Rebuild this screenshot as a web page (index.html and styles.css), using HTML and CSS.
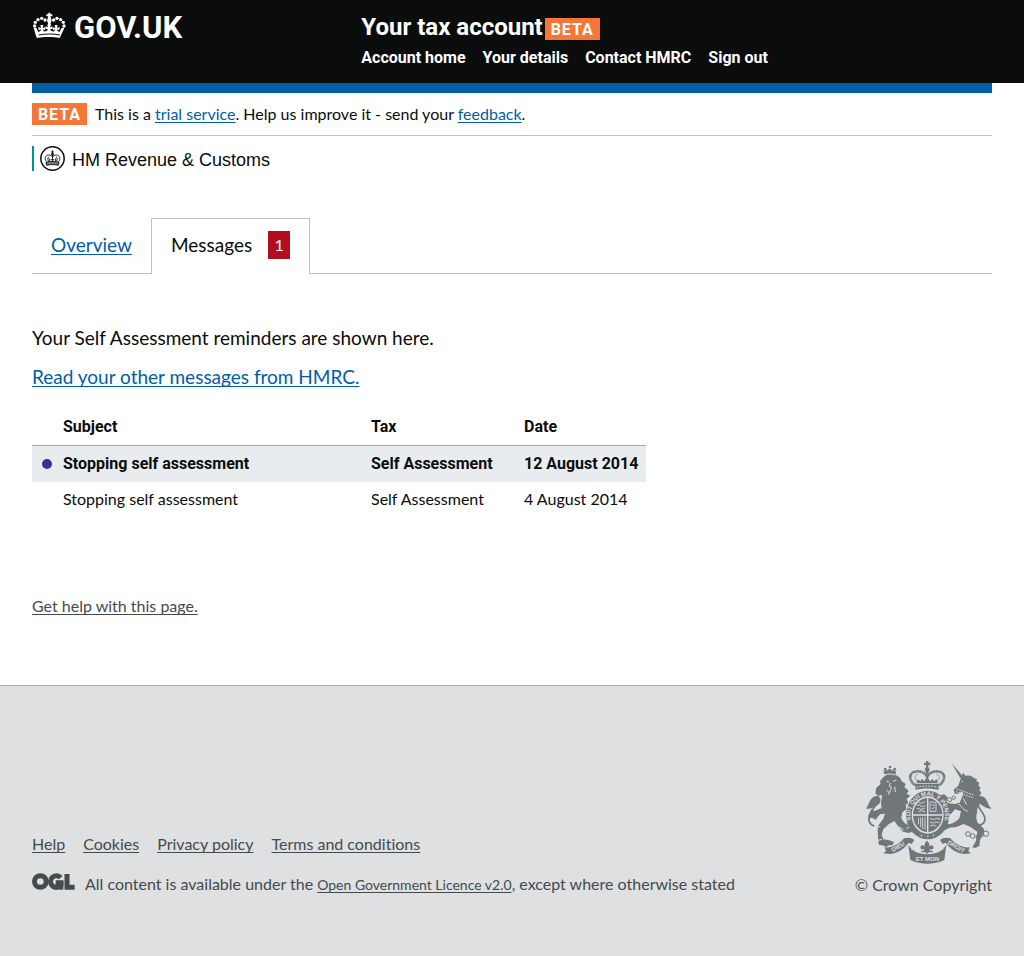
FILE: index.html
```html
<!DOCTYPE html>
<html lang="en">
<head>
<meta charset="utf-8">
<meta name="viewport" content="width=device-width, initial-scale=1">
<title>Messages - Your tax account - GOV.UK</title>
<link rel="stylesheet" href="styles.css">
</head>
<body>
<header class="site-header">
  <div class="wrap site-header__grid">
    <a class="logo" href="#">
      <svg class="logo__crown" viewBox="24 26 105 79" aria-hidden="true">
        <g fill="currentColor">
          <path d="M73 27h6v5h6v6h-6l2 6 2 7-3 7 1 8h-10l1-8-3-7 2-7 2-6h-6v-6h6z"/>
          <circle cx="32" cy="67" r="5"/><circle cx="34" cy="56" r="5"/><circle cx="42" cy="48" r="5"/><circle cx="53" cy="44" r="5"/><circle cx="63" cy="49" r="5"/>
          <circle cx="120" cy="67" r="5"/><circle cx="118" cy="56" r="5"/><circle cx="110" cy="48" r="5"/><circle cx="99" cy="44" r="5"/><circle cx="89" cy="49" r="5"/>
          <path d="M29 73l8-1 6 13c5-1 8-4 8-8l-7 3-1-10 8 3-2-9h9l-2 9 8-3-1 10-6-3c0 5 3 7 8 6 4-1 6-4 6-8l-6 2v-9l7 3-2-8h10l-2 8 7-3v9l-6-2c0 4 2 7 6 8 5 1 8-1 8-6l-6 3-1-10 8 3-2-9h9l-2 9 8-3-1 10-7-3c0 4 3 7 8 8l6-13 8 1-11 24-3 6c-20-4-48-4-68 0l-3-6z"/>
        </g>
        <path d="M44 94c20-4 44-4 64 0" fill="none" stroke="#0b0c0c" stroke-width="3"/>
      </svg>
      <span class="logo__text">GOV.UK</span>
    </a>
    <div class="service">
      <div class="service__title"><a class="service__name" href="#">Your tax account</a><strong class="phase-tag">BETA</strong></div>
      <nav class="service__nav" aria-label="Account">
        <a href="#">Account home</a>
        <a href="#">Your details</a>
        <a href="#">Contact HMRC</a>
        <a href="#">Sign out</a>
      </nav>
    </div>
  </div>
</header>

<main class="wrap main">
  <div class="blue-bar"></div>
  <div class="phase-banner">
    <strong class="phase-tag">BETA</strong>
    <p class="phase-banner__text">This is a <a href="#">trial service</a>. Help us improve it - send your <a href="#">feedback</a>.</p>
  </div>

  <div class="org">
    <svg class="org__crest" viewBox="0 0 75 75" aria-hidden="true">
      <circle cx="37.5" cy="37.5" r="35" fill="none" stroke="#0b0c0c" stroke-width="4.5"/>
      <g fill="none" stroke="#0b0c0c" stroke-width="2.6">
        <path d="M19 47c-7-10-3-19 6-20 7 0 11 3 12.500 7 1.500-4 5.500-7 12.500-7 9 1 13 10 6 20"/>
        <path d="M25 45c-3-6-1-12 2-13M50 45c3-6 1-12-2-13"/>
        <path d="M37.500 13v34M33 18h9M28 37v9M47 37v9M32 41h11"/>
        <path d="M18 49c12-4 27-4 39 0l-2 9c-12-3-23-3-35 0z" fill="#777"/>
      </g>
      <circle cx="37.500" cy="25" r="4" fill="#0b0c0c"/>
    </svg>
    <span class="org__name">HM Revenue &amp; Customs</span>
  </div>

  <nav class="tabs" aria-label="Sections">
    <a class="tab" href="#">Overview</a>
    <span class="tab tab--active" aria-current="page">Messages <span class="tab__count">1</span></span>
  </nav>

  <section class="content">
    <p class="lead">Your Self Assessment reminders are shown here.</p>
    <p class="lead"><a href="#">Read your other messages from HMRC.</a></p>
    <table class="messages">
      <thead>
        <tr><th class="col-subject" scope="col">Subject</th><th class="col-tax" scope="col">Tax</th><th class="col-date" scope="col">Date</th></tr>
      </thead>
      <tbody>
        <tr class="unread"><td class="col-subject"><span class="dot"></span>Stopping self assessment</td><td>Self Assessment</td><td>12 August 2014</td></tr>
        <tr class="read"><td class="col-subject">Stopping self assessment</td><td>Self Assessment</td><td>4 August 2014</td></tr>
      </tbody>
    </table>
    <a class="help" href="#">Get help with this page.</a>
  </section>
</main>

<footer class="footer">
  <div class="wrap footer__inner">
    <div class="footer__meta">
      <nav class="footer__links" aria-label="Footer">
        <a href="#">Help</a>
        <a href="#">Cookies</a>
        <a href="#">Privacy policy</a>
        <a href="#">Terms and conditions</a>
      </nav>
      <div class="licence">
        <svg class="licence__logo" viewBox="0 0 129 51" aria-hidden="true">
          <g fill="none" stroke="currentColor" stroke-width="15">
            <circle cx="25" cy="25.500" r="17.500"/>
            <path d="M86 14a17.500 17.500 0 1 0 1 22v-7H71"/>
            <path d="M105 3v40h23"/>
          </g>
          <path d="M80 26h14v24H80z" fill="currentColor"/>
        </svg>
        <p class="licence__text">All content is available under the <a href="#">Open Government Licence v2.0</a>, except where otherwise stated</p>
      </div>
    </div>
    <a class="copyright" href="#">
      <svg class="arms" viewBox="51 18 378 309" aria-hidden="true">
        <g fill="#6f777b">
          <!-- crown above the shield -->
          <path d="M231 18h7v5h6v7h-6v8h-7v-8h-6v-7h6z"/>
          <circle cx="234.500" cy="44" r="7"/>
          <path d="M197 86h75l-4 19c-22-6-46-6-68 0z"/>
          <path d="M203 84l3-12 8 7 5-8 6 8 9-12 10 12 6-8 5 8 8-7 3 12z"/>
        </g>
        <g fill="none" stroke="#6f777b">
          <g stroke-width="8" stroke-dasharray="6 1">
            <path d="M197 90c-22-20-16-41 11-41 13 1 23 7 27 18"/>
            <path d="M272 90c22-20 16-41-11-41-13 1-23 7-27 18"/>
          </g>
          <path d="M234.500 48v35" stroke-width="7" stroke-dasharray="6 1"/>
          <path d="M204 80c-10-12-6-21 3-22M265 80c10-12 6-21-3-22" stroke-width="2"/>
        </g>
        <path d="M202 97c21-5 45-5 66 0" fill="none" stroke="#dee0e2" stroke-width="3" stroke-dasharray="5 4"/>

        <!-- lion -->
        <g fill="#6f777b">
          <path d="M106 58l-3-14 6 4 2-5 5 4 3-5 5-1 4 6 5-4 3 6 6-4-3 15c-9-4-22-5-33-2z"/>
          <circle cx="123" cy="36" r="4"/><circle cx="109" cy="42" r="4"/><circle cx="137" cy="42" r="4"/>
          <path d="M107 63c8-8 25-10 34-3l12 8 5 11 12 8-4 9 13 12-6 8 11 6-11 10 5 12-8 5 2 14-12 9-3 16c5 15 17 22 30 25l5 7 12 3-3 9-12-2-9 4-18-4-15-17-11-15-16 9-17 15-5 17 5 14 18 3 14 5-4 9-11 1-8 5-12-5-10-1-2-11-2-29 1-17 16-22 5-15-15 2-13 16-11-6-8 2-3-9 6-8 2-10 10 5 22-9-2-12 3-28-12 4-8-8 3-17 13-11-2-9z"/>
        </g>
        <path d="M76 213c-18-5-20-23-11-41 7-12 23-23 20-45" fill="none" stroke="#6f777b" stroke-width="5"/>
        <path d="M51 161c6-9 8-16 14-27 6-9 14-12 23-11 10 8 8 21-3 28-10 8-20 11-34 10z" fill="#6f777b"/>
        <g fill="none" stroke="#dee0e2" stroke-width="3">
          <path d="M108 60c9-4 21-4 31 0M112 78l8 3m12-2l10-4M124 84l-3 10 7 3M112 105l9 8m7-16l-9 22m18-24l2 16"/>
          <path d="M86 187l9-9m-14 38l13-1m-7 41l12-3m65-28l-14-10M77 265l8 3m87-48l12-5"/>
        </g>

        <!-- unicorn -->
        <g fill="#6f777b">
          <path d="M308 25l33 39-7 6z"/>
          <path d="M337 66l5-13 8 10c11-3 20 0 24 6l10 3-2 6 9 5-3 8 7 7-4 8 6 8-6 9 5 10-8 8c0 23-12 43-2 62 10 11 21 16 20 25l-13 27-2 18-12 6-9-2 11-20 4-27-22-15-19-8c-15 7-29 13-40 10l-20 10-10-7 3-8 15-5c13 4 26-4 39-17l5-21-18-6-12 14-14 4-6-9 7-5 1-11-15-8 3-15-9-2 1-10 12-3 10 9-4 14 8 4 18 2 14-4 10-24-1-10-16 8-8-1-3-12 14-12z"/>
        </g>
        <path d="M382 210c26 2 31-16 20-34-8-13-20-23-11-42" fill="none" stroke="#6f777b" stroke-width="5"/>
        <path d="M428 161c-9-7-10-16-15-25-5-10-14-14-23-11-8 10-3 19 8 25 9 7 17 11 30 11z" fill="#6f777b"/>
        <g fill="none" stroke="#dee0e2" stroke-width="3">
          <path d="M338 81l7-3m-24 32l52 19m-50-27l51 18" stroke-dasharray="5 3"/>
          <path d="M330 147c12 13 14 18 26 22m-13-38l10 18"/>
        </g>
        <g fill="none" stroke="#6f777b" stroke-width="3">
          <circle cx="302" cy="134" r="6"/><circle cx="314" cy="128" r="5"/><circle cx="378" cy="172" r="5"/>
          <circle cx="357" cy="237" r="7"/><circle cx="371" cy="243" r="7"/><circle cx="387" cy="246" r="6"/><circle cx="398" cy="239" r="6"/><circle cx="411" cy="236" r="8"/>
        </g>

        <!-- garter and shield -->
        <ellipse cx="236" cy="180" rx="65" ry="73" fill="#6f777b"/>
        <ellipse cx="236" cy="180" rx="48" ry="56" fill="#dee0e2"/>
        <ellipse cx="236" cy="180" rx="44" ry="51" fill="#6f777b"/>
        <g fill="none" stroke="#dee0e2">
          <path d="M236 130v101M192 180h88" stroke-width="4"/>
          <path d="M202 150h11l4 5 12-3M203 160l13 3 12-4M208 170l10-3 10 3M208 141l10 4 10-5M243 141l18 1v27h-18zM248 149l10 2m-9 10l8-4M209 188l-1 20m7-21v29m6-29v35m7-35v38M243 190l10 4 10-4 11 3M243 201l10 3 8-3 10 2M243 213l9-3 10 4" stroke-width="2.500"/>
        </g>
        <path id="garter" d="M199 224A52 60 0 1 1 273 224" fill="none"/>
        <text class="arms__garter"><textPath href="#garter" startOffset="50%">SOIT QUI MAL Y PENSE</textPath></text>
        <path d="M216 242h3m16 2h3m14-3h3" stroke="#dee0e2" stroke-width="5"/>

        <!-- motto ribbon -->
        <g fill="#6f777b">
          <path d="M107 277c20 2 44-9 58-27 12-4 22-2 31 5l-8 12-9-4c-15 20-34 33-58 34l-18-2 8-7z"/>
          <path d="M362 277c-20 2-44-9-58-27-12-4-22-2-31 5l8 12 9-4c15 20 34 33 58 34l18-2-8-7z"/>
          <path d="M178 270c7 10 13 14 24 22 21 7 45 7 66 0 11-8 17-12 24-22l-6 45c-32 15-70 15-102 0z"/>
          <path d="M234 257c8 7 9 13 5 20 4-9 14-8 15 0 0 6-6 8-11 5v5h8v5h-12l-5 7-5-7h-12v-5h8v-5c-5 3-11 1-11-5 1-8 11-9 15 0-4-7-3-13 5-20z"/>
        </g>
        <path d="M188 282c30 19 64 19 94 0M190 268l-2 17m92-17l2 17" fill="none" stroke="#dee0e2" stroke-width="2"/>
        <g class="arms__motto">
          <text x="147" y="281" transform="rotate(-30 147 274)">DIEU</text>
          <text x="235" y="317">ET MON</text>
          <text x="322" y="281" transform="rotate(30 322 274)">DROIT</text>
        </g>
      </svg>
      <span>© Crown Copyright</span>
    </a>
  </div>
</footer>
</body>
</html>
```
FILE: styles.css
```css
* { box-sizing: border-box; }

body {
  margin: 0;
  min-height: 100vh;
  display: flex;
  flex-direction: column;
  background: #fff;
  color: #0b0c0c;
  font-family: Lato, "Noto Sans", sans-serif;
  font-size: 16px;
  font-variant-ligatures: none;
  line-height: 20px;
}

p { margin: 0; }

a {
  color: #005ea5;
  text-underline-offset: 2px;
  text-decoration-thickness: 1px;
  text-decoration-skip-ink: none;
}

.wrap {
  width: 100%;
  padding: 0 32px;
}

/* Header */
.site-header { background: #0b0c0c; color: #fff; }
.site-header a { color: #fff; text-decoration: none; }

.site-header,
.phase-tag,
.messages th,
.unread { font-family: Roboto, "Noto Sans", sans-serif; }

.site-header__grid {
  display: grid;
  grid-template-columns: 1fr 2fr;
  column-gap: 14px;
  padding-top: 12px;
  padding-bottom: 15px;
}

.logo {
  display: flex;
  align-items: flex-start;
  gap: 7px;
}
.logo__crown { width: 35px; height: 27px; }
.logo__text { font-size: 31px; line-height: 32px; font-weight: 700; }

.service__title {
  display: flex;
  align-items: flex-end;
  gap: 2px;
}
.service__name { font-size: 24px; line-height: 30px; font-weight: 700; }

.phase-tag {
  flex: none;
  width: 55px;
  padding-top: 2px;
  background: #f47738;
  color: #fff;
  font-size: 16px;
  line-height: 20px;
  font-weight: 700;
  text-align: center;
  letter-spacing: 1px;
}
.service__title .phase-tag { margin-bottom: 2px; }

.service__nav {
  display: flex;
  flex-wrap: wrap;
  gap: 17px;
  padding-top: 6px;
  font-weight: 700;
}

/* Main */
.main { flex: 1; padding-bottom: 68px; }
.blue-bar { height: 10px; background: #005ea5; }

.phase-banner {
  display: flex;
  align-items: center;
  gap: 8px;
  padding: 10px 0;
  border-bottom: 1px solid #bfc1c3;
}
.phase-banner__text { line-height: 22px; }

.org {
  display: flex;
  align-items: center;
  height: 25px;
  margin-top: 10px;
  padding-left: 6px;
  border-left: 2px solid #009390;
}
.org__crest { width: 25px; height: 25px; margin-right: 7px; }
.org__name {
  padding-top: 3px;
  font-family: "Liberation Sans", Arial, sans-serif;
  font-size: 18px;
  line-height: 25px;
}

.tabs {
  display: flex;
  margin-top: 47px;
  border-bottom: 1px solid #bfc1c3;
  font-size: 19px;
}
.tab { padding: 13px 19px 14px; line-height: 28px; }
.tab--active {
  display: flex;
  gap: 16px;
  margin-bottom: -1px;
  padding: 12px 19px 15px;
  border: 1px solid #bfc1c3;
  border-bottom: 0;
  background: #fff;
}
.tab__count {
  width: 22px;
  background: #b10e1e;
  color: #fff;
  font-size: 16px;
  text-align: center;
}

.content { padding-top: 51px; }
.lead { margin-bottom: 14px; font-size: 19px; line-height: 25px; }

.messages {
  width: 64%;
  margin-top: 16px;
  border-collapse: collapse;
  table-layout: fixed;
}
.messages th,
.messages td { padding: 8px 0; text-align: left; }
.messages th { padding: 12px 0 8px; border-bottom: 1px solid #a1acb2; }
.messages .read td { padding: 7px 0 9px; }
.messages .col-subject,
.messages .read .col-subject { width: 339px; padding-left: 31px; position: relative; }
.col-tax { width: 153px; }
.unread { background: #e8ecef; font-weight: 700; }
.dot {
  position: absolute;
  left: 10px;
  top: 13px;
  width: 10px;
  height: 10px;
  border-radius: 50%;
  background: #2e358b;
}

.help { display: inline-block; margin-top: 78px; color: #454a4c; }

/* Footer */
.footer {
  background: #dee0e2;
  border-top: 1px solid #a1acb2;
  color: #454a4c;
}
.footer a { color: #454a4c; }
.footer__inner {
  display: flex;
  justify-content: space-between;
  align-items: flex-end;
  gap: 24px;
  padding-top: 75px;
  padding-bottom: 61px;
}
.footer__links { display: flex; flex-wrap: wrap; gap: 18px; }
.licence { display: flex; align-items: flex-start; gap: 10px; margin-top: 19px; }
.licence__logo { flex: none; width: 43px; height: 17px; }
.licence__text { line-height: 21px; }
.licence__text a { font-size: 14px; }

.footer .copyright {
  display: flex;
  flex: none;
  flex-direction: column;
  align-items: flex-end;
  gap: 11px;
  text-decoration: none;
}
.arms { width: 126px; height: 103px; }
.arms text { fill: #dee0e2; font-family: "Liberation Sans", Arial, sans-serif; font-weight: 700; }
.arms__garter { font-size: 18px; text-anchor: middle; }
.arms__motto text { font-size: 18px; text-anchor: middle; }
```
